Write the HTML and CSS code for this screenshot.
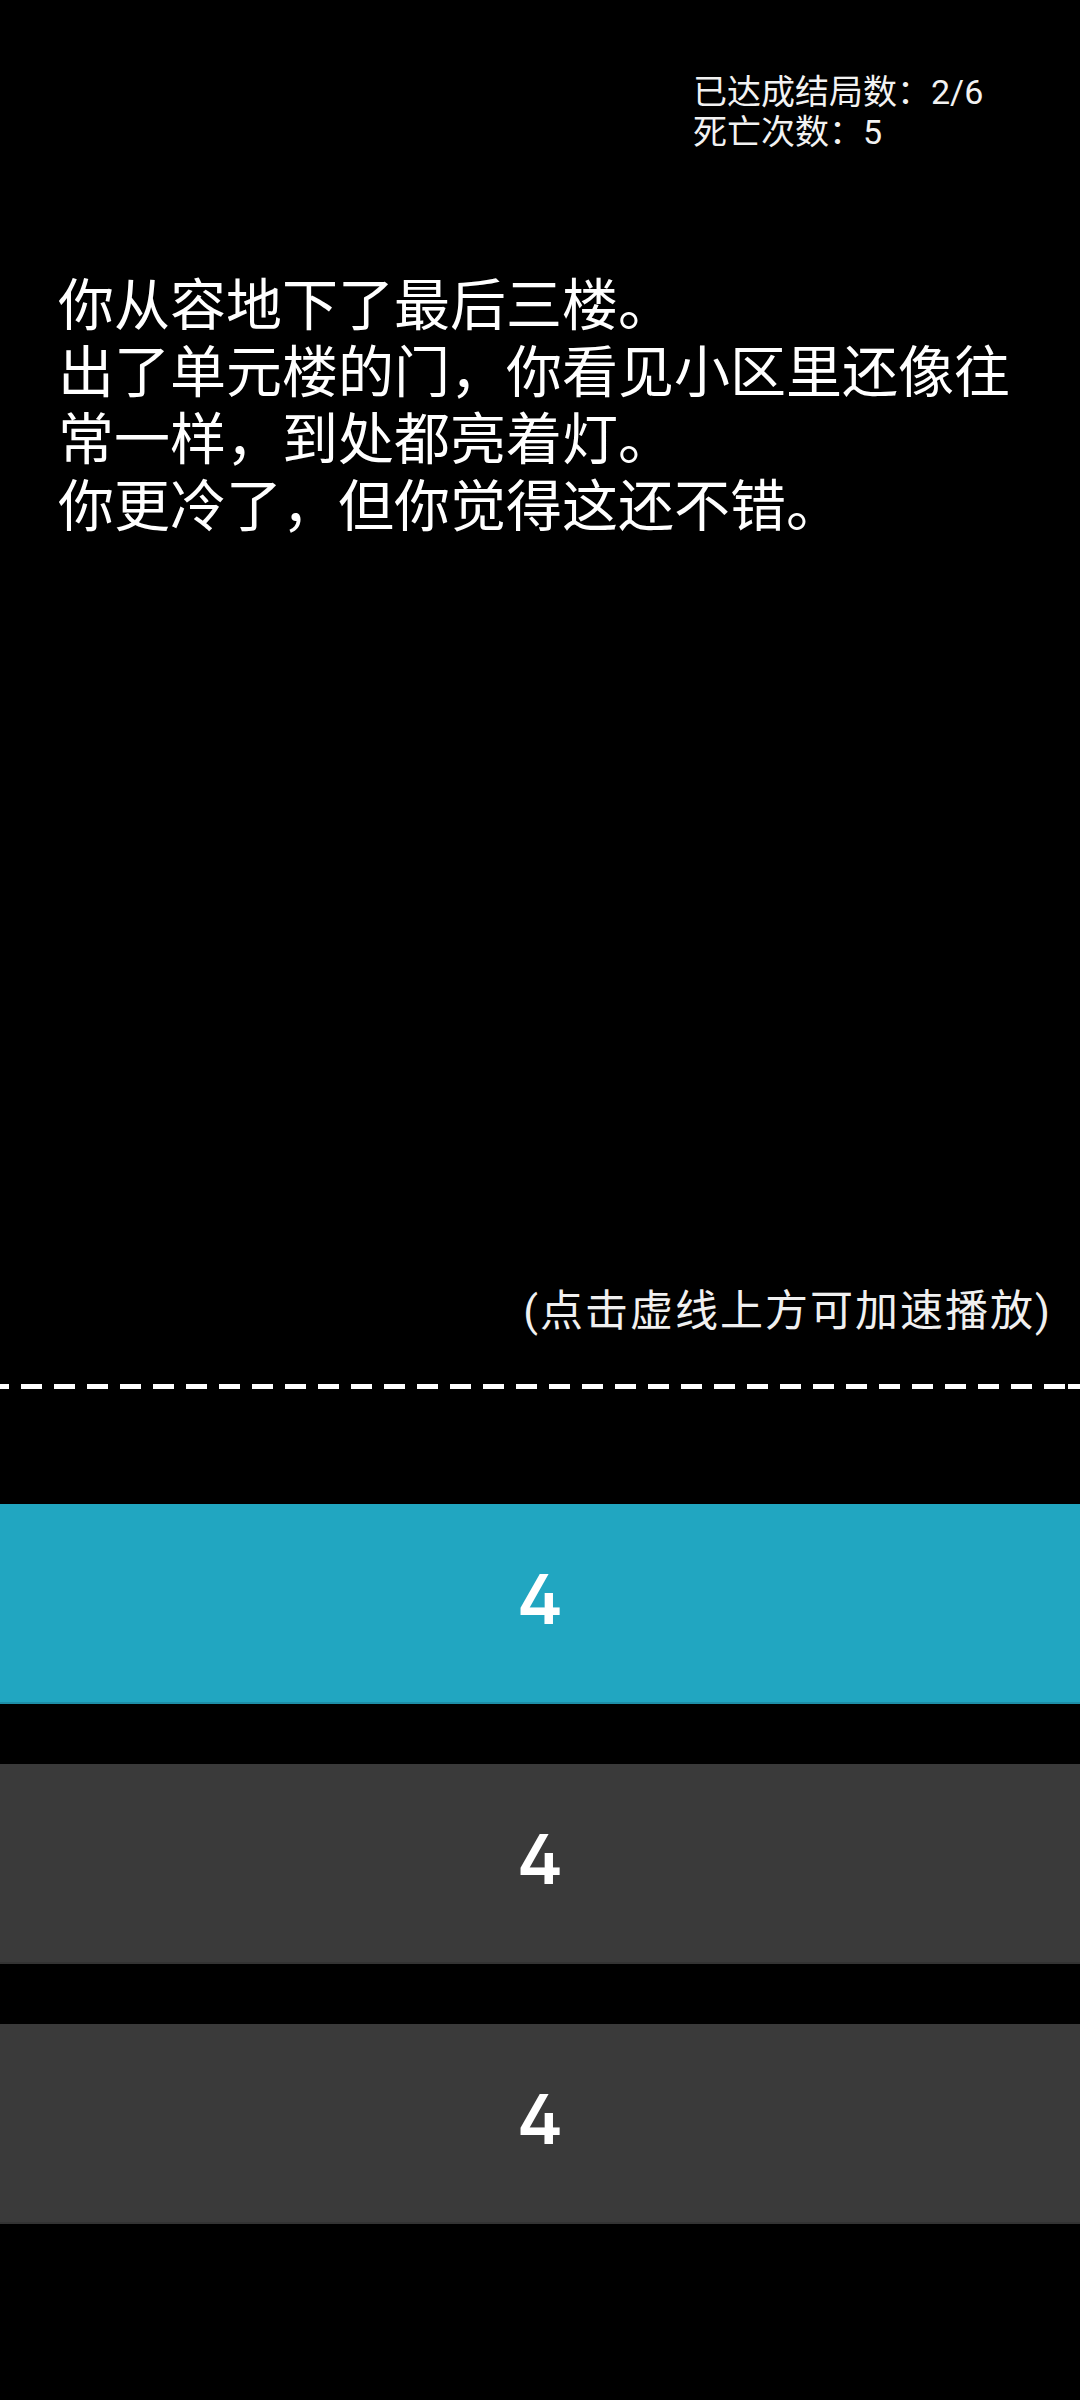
FILE: index.html
```html
<!DOCTYPE html>
<html lang="zh-CN">
<head>
<meta charset="utf-8">
<title>结局</title>
<link rel="stylesheet" href="styles.css">
</head>
<body>
<div class="stage">
  <div class="stats">
    <div class="stat-line">已达成结局数：2/6</div>
    <div class="stat-line">死亡次数：5</div>
  </div>
  <div class="story">
    <p class="story-line">你从容地下了最后三楼。</p>
    <p class="story-line">出了单元楼的门，你看见小区里还像往常一样，到处都亮着灯。</p>
    <p class="story-line">你更冷了，但你觉得这还不错。</p>
  </div>
  <div class="hint">(点击虚线上方可加速播放)</div>
</div>
<div class="dash"></div>
<div class="choices">
  <div class="choice choice-active">4</div>
  <div class="choice">4</div>
  <div class="choice">4</div>
</div>
</body>
</html>
```
FILE: styles.css
```css
html, body {
  margin: 0;
  padding: 0;
  background: #000;
}
body {
  width: 1080px;
  height: 2400px;
  overflow: hidden;
  color: #fff;
  font-family: "Roboto", "Noto Sans CJK SC", sans-serif;
}
.stage {
  height: 1384px;
  display: flex;
  flex-direction: column;
}
.stats {
  margin-left: 693px;
  padding-top: 72px;
  font-size: 34px;
  line-height: 40px;
  color: #f2f2f2;
}
.story {
  margin-top: 121px;
  padding: 0 58px;
  font-size: 56px;
  line-height: 67px;
}
.story-line {
  margin: 0;
}
.hint {
  margin-top: auto;
  margin-bottom: 43px;
  padding-right: 28px;
  text-align: right;
  font-size: 43px;
  line-height: 60px;
  letter-spacing: 2px;
  color: #f0f0f0;
}
.dash {
  height: 5px;
  background-image: repeating-linear-gradient(to right, #fff 0 21px, transparent 21px 33px);
  background-position: -12px 0;
}
.choices {
  padding-top: 115px;
  display: flex;
  flex-direction: column;
  gap: 60px;
}
.choice {
  box-sizing: content-box;
  height: 190px;
  padding-bottom: 8px;
  border-bottom: 2px solid #333;
  background: #3a3a3a;
  display: flex;
  align-items: center;
  justify-content: center;
  font-family: "Inter", "Noto Sans", sans-serif;
  font-feature-settings: "cv02" 1;
  font-weight: 600;
  font-size: 69px;
  color: #fff;
}
.choice-active {
  background: #21a6c1;
  border-bottom-color: #1d8ea7;
}
```
